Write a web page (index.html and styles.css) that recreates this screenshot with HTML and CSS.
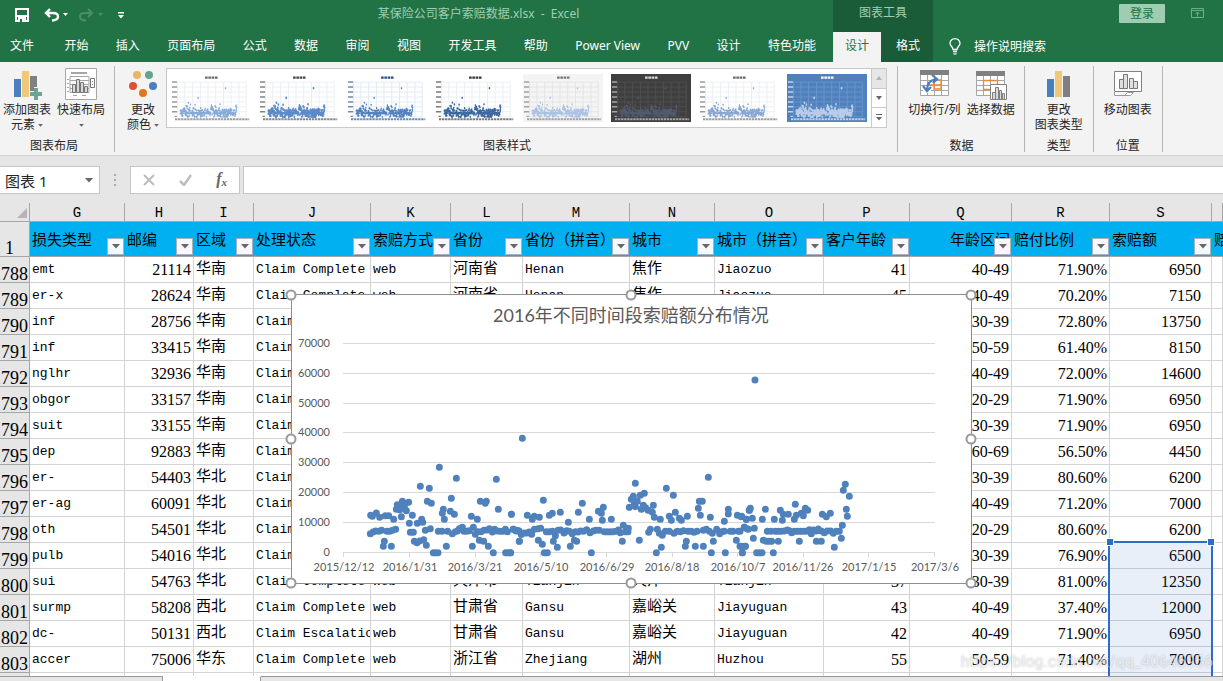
FILE: index.html
```html
<!DOCTYPE html>
<html lang="zh-CN">
<head>
<meta charset="utf-8">
<title>某保险公司客户索赔数据.xlsx - Excel</title>
<link rel="stylesheet" href="styles.css">
</head>
<body>
<svg class="defs" aria-hidden="true">
  <defs>
    <g id="dots" transform="translate(-6 146) scale(.33333)" fill="none" stroke="currentColor" stroke-linecap="round">
      <path d="M463 82h0M514 115h0M406 139h0M433 145h0M499 175h0M634 118h0M256 281h0M264 276h0M272 273h0M282 274h0M290 271h0M306 274h0M314 274h0M323 271h0M332 268h0M376 277h0M385 277h0M421 271h0M436 266h0M460 274h0M471 274h0M488 274h0M502 281h0M511 275h0M517 273h0M523 266h0M532 262h0M537 274h0M545 274h0M553 272h0M565 262h0M571 283h0M578 275h0M588 275h0M597 271h0M606 270h0M613 266h0M622 276h0M629 268h0M637 273h0M645 274h0M653 274h0M661 268h0M667 275h0M685 268h0M693 271h0M701 272h0M709 283h0M257 226h0M262 229h0M274 219h0M284 232h0M301 227h0M311 227h0M326 238h0M349 230h0M334 208h0M337 194h0M344 209h0M352 184h0M355 198h0M361 190h0M359 205h0M371 187h0M364 212h0M382 226h0M373 250h0M397 250h0M410 238h0M413 247h0M427 184h0M439 190h0M472 220h0M475 208h0M478 238h0M496 214h0M508 223h0M559 229h0M577 238h0M586 184h0M601 190h0M604 184h0M640 208h0M679 223h0M295 319h0M298 304h0M319 319h0M388 304h0M396 308h0M404 303h0M416 299h0M424 316h0M484 319h0M562 319h0M583 301h0M596 304h0M610 319h0M445 338h0M452 338h0M459 338h0M625 338h0M662 338h0M669 338h0M677 338h0M703 304h0"/>
      <path transform="translate(675 0)" d="M37 -5h0M735 -180h0M376 130h0M469 145h0M595 112h0M490 166h0M100 181h0M217 190h0M4 223h0M52 226h0M67 238h0M73 229h0M88 232h0M118 226h0M127 220h0M151 217h0M175 247h0M205 217h0M238 238h0M265 214h0M274 220h0M280 202h0M277 241h0M304 238h0M358 202h0M364 178h0M370 169h0M373 187h0M382 184h0M376 200h0M391 166h0M403 160h0M394 208h0M400 196h0M407 203h0M414 211h0M427 217h0M430 196h0M433 232h0M451 238h0M478 229h0M484 241h0M496 217h0M508 235h0M514 241h0M532 229h0M565 205h0M568 184h0M577 184h0M571 226h0M601 232h0M643 244h0M655 208h0M655 222h0M682 226h0M695 229h0M709 238h0M718 211h0M10 268h0M18 273h0M26 273h0M34 283h0M42 279h0M50 279h0M58 276h0M65 283h0M73 268h0M84 266h0M92 265h0M109 275h0M118 275h0M127 274h0M136 287h0M144 271h0M152 270h0M162 279h0M170 272h0M178 274h0M187 281h0M196 275h0M204 276h0M212 273h0M220 274h0M230 269h0M240 278h0M250 273h0M258 271h0M268 271h0M283 275h0M292 275h0M301 275h0M309 275h0M317 274h0M325 270h0M331 278h0M340 256h0M346 275h0M355 265h0M354 275h0M416 277h0M421 268h0M442 268h0M448 280h0M457 286h0M466 274h0M478 274h0M492 280h0M502 274h0M511 275h0M520 272h0M534 274h0M543 274h0M552 277h0M561 274h0M580 271h0M589 268h0M598 274h0M607 280h0M620 268h0M629 281h0M636 275h0M643 274h0M661 274h0M669 274h0M685 274h0M703 262h0M711 266h0M1 338h0M28 304h0M85 301h0M97 313h0M103 338h0M112 338h0M130 304h0M142 322h0M181 319h0M193 301h0M200 304h0M244 338h0M337 304h0M388 301h0M439 338h0M454 322h0M526 319h0M529 304h0M556 319h0M580 319h0M604 338h0M610 304h0M646 338h0M679 301h0M690 319h0M706 319h0M697 338h0"/>
      <path transform="translate(1365 0)" d="M4 230h0M19 238h0M28 211h0M31 205h0M37 235h0M67 238h0M76 208h0M103 238h0M121 211h0M127 241h0M130 223h0M145 223h0M163 238h0M169 226h0M166 193h0M184 220h0M190 227h0M196 205h0M203 211h0M247 223h0M259 230h0M271 220h0M307 256h0M310 151h0M316 133h0M328 169h0M319 208h0M322 229h0M0 274h0M13 262h0M25 268h0M43 265h0M82 274h0M93 274h0M106 274h0M115 274h0M124 274h0M133 273h0M142 270h0M148 272h0M155 278h0M163 274h0M172 274h0M181 274h0M190 274h0M199 274h0M208 269h0M214 281h0M220 270h0M229 273h0M235 267h0M244 273h0M253 278h0M262 273h0M272 273h0M280 280h0M289 274h0M298 274h0M40 295h0M4 319h0M16 319h0M7 338h0M50 338h0M58 338h0M66 338h0M100 338h0M70 301h0M79 304h0M87 304h0M95 304h0M115 304h0M178 304h0M229 304h0M244 304h0M283 322h0M304 295h0"/>
    </g>
    <symbol id="thumb" viewBox="0 0 681 290" preserveAspectRatio="none">
      <g fill="none" stroke="var(--grid)" stroke-width="6">
        <path d="M52 49H644M52 79H644M52 109H644M52 139H644M52 169H644M52 198H644M52 228H644M52 258H644"/>
        <path stroke-width="8" d="M56 49V258M118 49V258M184 49V258M250 49V258M315 49V258M381 49V258M447 49V258M512 49V258M578 49V258M640 49V258"/>
      </g>
      <path stroke="var(--ink)" stroke-width="14" stroke-dasharray="22 6" d="M290 22h106"/>
      <g stroke="var(--ink)" fill="none" stroke-width="9" opacity=".65">
        <path d="M8 49h44M8 79h44M8 109h44M8 139h44M8 169h44M8 198h44M8 228h44M30 256h20"/>
        <path stroke-width="12" stroke-dasharray="20 6" d="M34 274h632"/>
      </g>
      <use href="#dots"/>
    </symbol>
    <symbol id="down" viewBox="0 0 8 5"><path fill="currentColor" d="M0 0h8L4 4.500z"/></symbol>
  </defs>
</svg>

<header class="top">
  <div class="top-main">
    <div class="title-row">
      <div class="quick">
        <button aria-label="保存"><svg width="14" height="14" viewBox="0 0 14 14"><path fill="none" stroke="#fff" stroke-width="2" d="M1 1h12v12H1zM2 8h10"/><path fill="#fff" d="M3 9h8v5H3z"/><path fill="#217346" d="M5 11h2v3H5z"/></svg></button>
        <button class="undo" aria-label="撤销"><svg width="25" height="14" viewBox="0 0 25 14"><path fill="none" stroke="#fff" stroke-width="2.400" d="M6 1L2 5l4 4M2 5h7c3.500 0 5 1.500 5 3.500S12 12.500 8 12.500"/><path fill="#fff" d="M19 5h5l-2.500 3z"/></svg></button>
        <button class="redo" aria-label="恢复"><svg width="25" height="14" viewBox="0 0 25 14"><path fill="none" stroke="#4a8f67" stroke-width="2" d="M9 1l4 4-4 4M13 5H6C2.500 5 1 6.500 1 8.500S3 12.500 7 12.500"/><path fill="#4a8f67" d="M19 5h5l-2.500 3z"/></svg></button>
        <button class="more" aria-label="自定义快速访问工具栏"><svg width="6" height="7" viewBox="0 0 6 7"><path fill="#fff" d="M0 0h6v1.500H0zM0 3h6L3 6.500z"/></svg></button>
      </div>
      <h1 class="title">某保险公司客户索赔数据.xlsx&nbsp; -&nbsp; Excel</h1>
    </div>
    <nav class="tabs">
      <a class="file" href="#">文件</a><a href="#">开始</a><a href="#">插入</a><a href="#">页面布局</a><a href="#">公式</a><a href="#">数据</a><a href="#">审阅</a><a href="#">视图</a><a href="#">开发工具</a><a href="#">帮助</a><a href="#">Power View</a><a href="#">PVV</a><a href="#">设计</a><a href="#">特色功能</a>
    </nav>
  </div>
  <div class="context">
    <div class="context-title">图表工具</div>
    <nav class="tabs"><a class="active" href="#">设计</a><a href="#">格式</a></nav>
  </div>
  <div class="top-end">
    <div class="account">
      <button class="login">登录</button>
      <button aria-label="功能区显示选项"><svg width="13" height="10" viewBox="0 0 13 10"><path fill="none" stroke="#6fae87" d="M.5.5h12v9H.5zM.5 2.500h12M6.500 8.500V4M4.500 6l2-2 2 2"/></svg></button>
    </div>
    <a class="tell" href="#"><svg width="12" height="17" viewBox="0 0 12 17"><path fill="none" stroke="#fff" stroke-width="1.300" d="M4 11.500C4 9 1 8 1 5.300a5 4.600 0 0110 0C11 8 8 9 8 11.500zM4 13.500h4M4.500 15.800h3"/></svg>操作说明搜索</a>
  </div>
</header>

<section class="ribbon">
  <div class="group g-layout">
    <div class="tools">
      <button class="tool"><svg width="32" height="32" viewBox="0 0 32 32"><path fill="#4a7fbb" d="M3 11h7v18H3z"/><path fill="#efc87c" d="M11 3h7v26h-7z"/><path fill="#808080" d="M19 8h7v11h-3v4h-4z"/><path fill="#6da58f" d="M23 20h4v4h4v4h-4v4h-4v-4h-4v-4h4z"/></svg><span>添加图表<br>元素 <svg class="caret" width="5" height="3"><use href="#down"/></svg></span></button>
      <button class="tool"><svg width="32" height="32" viewBox="0 0 32 32"><path fill="#fff" stroke="#a6a6a6" d="M.5.500h31v31H.5z"/><path stroke="#a6a6a6" stroke-width="2" d="M6 5h16"/><path fill="none" stroke="#a6a6a6" d="M5 8.500h19v16H5zM5 12.500h19M5 16.500h19M5 20.500h19M2 11.500h2M2 15.500h2M2 19.500h2M2 23.500h2M8 27.500h4M17 27.500h4"/><path fill="#d9d9d9" stroke="#777" d="M7.500 16.500h3v8h-3zM11.500 11.500h3v13h-3zM15.500 14.500h3v10h-3zM19.500 18.500h3v6h-3z"/><path fill="#fff" stroke="#777" d="M25.500 10.500h4v9h-4zM27 13.500h1M27 16.500h1"/></svg><span>快速布局<br><svg class="caret" width="5" height="3"><use href="#down"/></svg></span></button>
    </div>
    <div class="label">图表布局</div>
  </div>
  <div class="group g-style">
    <div class="tools">
      <button class="tool"><svg width="32" height="32" viewBox="0 0 32 32"><circle cx="10" cy="7" r="4" fill="#eab567"/><circle cx="22" cy="7" r="4" fill="#65a48c"/><circle cx="6" cy="18" r="4" fill="#d85433"/><circle cx="26" cy="18" r="4" fill="#4a7fbb"/><circle cx="16" cy="25" r="4" fill="#e2761d"/></svg><span>更改<br>颜色 <svg class="caret" width="5" height="3"><use href="#down"/></svg></span></button>
      <div class="gallery">
        <div class="thumbs">
          <button class="t1" aria-label="样式 1"><svg><use href="#thumb"/></svg></button>
          <button class="t2" aria-label="样式 2"><svg><use href="#thumb"/></svg></button>
          <button class="t3" aria-label="样式 3"><svg><use href="#thumb"/></svg></button>
          <button class="t4" aria-label="样式 4"><svg><use href="#thumb"/></svg></button>
          <button class="t5" aria-label="样式 5"><svg><use href="#thumb"/></svg></button>
          <button class="t6" aria-label="样式 6"><svg><use href="#thumb"/></svg></button>
          <button class="t7" aria-label="样式 7"><svg><use href="#thumb"/></svg></button>
          <button class="t8" aria-label="样式 8"><svg><use href="#thumb"/></svg></button>
        </div>
        <div class="scroller">
          <button class="off" aria-label="上一行"><svg width="6" height="4" viewBox="0 0 6 4"><path fill="#b5b5b5" d="M0 4h6L3 0z"/></svg></button>
          <button aria-label="下一行"><svg width="6" height="4" viewBox="0 0 6 4"><path fill="#666" d="M0 0h6L3 4z"/></svg></button>
          <button aria-label="其他"><svg width="6" height="7" viewBox="0 0 6 7"><path fill="#666" d="M0 0h6v1H0zM0 3h6L3 6.500z"/></svg></button>
        </div>
      </div>
    </div>
    <div class="label">图表样式</div>
  </div>
  <div class="group g-data">
    <div class="tools">
      <button class="tool"><svg width="32" height="32" viewBox="0 0 32 32"><path fill="#fff" stroke="#a6a6a6" d="M2.500 3.500h28v24h-28zM2.500 12.500h28M2.500 17.500h28M2.500 22.500h28M9.500 6v21M16.500 6v21M23.500 6v21"/><path fill="#808080" d="M2 2h29v5H2z"/><path fill="none" stroke="#ed8733" stroke-width="1.300" d="M16 12h7v9h-7zM9 17h14"/><path fill="#fff" d="M5 18h8v7H5z"/><path fill="none" stroke="#4a7fbb" stroke-width="2.200" d="M9 22c0-7 3-10 9-11M14 7l5 4-4 4M5 18l4 5 4-4"/></svg><span>切换行/列</span></button>
      <button class="tool"><svg width="32" height="32" viewBox="0 0 32 32"><path fill="#fff" stroke="#a6a6a6" d="M1.500 3.500h28v24h-28zM1.500 12.500h28M1.500 17.500h28M1.500 22.500h28M8.500 7v20M15.500 7v20M22.500 7v20"/><path fill="#808080" d="M1 3h29v5H1z"/><path fill="none" stroke="#ed8733" stroke-width="1.300" d="M8.500 22v-9.500h14V16M8.500 21.500H15"/><path fill="#fff" stroke="#808080" d="M15.500 16.500h16v15h-16z"/><path fill="#d9d9d9" stroke="#808080" d="M17.500 24.500h3v7h-3zM20.500 19.500h3v12h-3zM24.500 22.500h2v9h-2zM27.500 25.500h2v6h-2z"/></svg><span>选择数据</span></button>
    </div>
    <div class="label">数据</div>
  </div>
  <div class="group g-type">
    <div class="tools">
      <button class="tool"><svg width="32" height="32" viewBox="0 0 32 32"><path fill="#4a7fbb" d="M4 11h7v18H4z"/><path fill="#efc87c" d="M12 3h7v26h-7z"/><path fill="#808080" d="M20 8h7v21h-7z"/></svg><span>更改<br>图表类型</span></button>
    </div>
    <div class="label">类型</div>
  </div>
  <div class="group g-place">
    <div class="tools">
      <button class="tool"><svg width="32" height="32" viewBox="0 0 32 32"><path fill="#fff" stroke="#808080" d="M2.500 3.500h27v20h-27z"/><path fill="#e0e0e0" stroke="#777" d="M7.500 11.500h4v9h-4zM11.500 6.500h4v14h-4zM17.500 10.500h4v10h-4zM21.500 13.500h4v7h-4z"/><path fill="#fff" stroke="#999" d="M2.500 23.500v4h10l3-3h6l-3 3h-9"/></svg><span>移动图表</span></button>
    </div>
    <div class="label">位置</div>
  </div>
</section>

<section class="formula-bar">
  <div class="name-box">
    <input aria-label="名称框" value="图表 1">
    <button aria-label="名称列表"><svg width="8" height="5"><use href="#down"/></svg></button>
  </div>
  <svg class="grip" width="2" height="12" viewBox="0 0 2 12"><path fill="#aaa" d="M0 0h2v2H0zM0 5h2v2H0zM0 10h2v2H0z"/></svg>
  <div class="fx-box">
    <button aria-label="取消"><svg width="12" height="12" viewBox="0 0 12 12"><path stroke="#bdbdbd" stroke-width="2" d="M1 1l10 10M11 1L1 11"/></svg></button>
    <button aria-label="输入"><svg width="13" height="12" viewBox="0 0 13 12"><path fill="none" stroke="#bdbdbd" stroke-width="2.500" d="M1 7l4 4 7-10"/></svg></button>
    <button class="fx" aria-label="插入函数">f<sub>x</sub></button>
  </div>
  <input class="formula" aria-label="编辑栏">
</section>

<main class="sheet">
  <table>
    <colgroup><col class="w30"><col class="w95"><col class="w69"><col class="w60"><col class="w117"><col class="w80"><col class="w72"><col class="w107"><col class="w85"><col class="w109"><col class="w86"><col class="w102"><col class="w98"><col class="w102"><col></colgroup>
    <thead>
      <tr class="letters"><th class="corner"><svg width="10" height="10" viewBox="0 0 10 10"><path fill="#b4b4b4" d="M10 0v10H0z"/></svg></th><th>G</th><th>H</th><th>I</th><th>J</th><th>K</th><th>L</th><th>M</th><th>N</th><th>O</th><th>P</th><th>Q</th><th>R</th><th>S</th><th></th></tr>
      <tr class="fields"><th class="rownum">1</th>
        <th>损失类型<button aria-label="筛选损失类型"><svg width="8" height="5"><use href="#down"/></svg></button></th>
        <th>邮编<button aria-label="筛选邮编"><svg width="8" height="5"><use href="#down"/></svg></button></th>
        <th>区域<button aria-label="筛选区域"><svg width="8" height="5"><use href="#down"/></svg></button></th>
        <th>处理状态<button aria-label="筛选处理状态"><svg width="8" height="5"><use href="#down"/></svg></button></th>
        <th>索赔方式<button aria-label="筛选索赔方式"><svg width="8" height="5"><use href="#down"/></svg></button></th>
        <th>省份<button aria-label="筛选省份"><svg width="8" height="5"><use href="#down"/></svg></button></th>
        <th>省份（拼音）<button aria-label="筛选省份拼音"><svg width="8" height="5"><use href="#down"/></svg></button></th>
        <th>城市<button aria-label="筛选城市"><svg width="8" height="5"><use href="#down"/></svg></button></th>
        <th>城市（拼音）<button aria-label="筛选城市拼音"><svg width="8" height="5"><use href="#down"/></svg></button></th>
        <th>客户年龄<button aria-label="筛选客户年龄"><svg width="8" height="5"><use href="#down"/></svg></button></th>
        <th class="right">年龄区间<button aria-label="筛选年龄区间"><svg width="8" height="5"><use href="#down"/></svg></button></th>
        <th>赔付比例<button aria-label="筛选赔付比例"><svg width="8" height="5"><use href="#down"/></svg></button></th>
        <th>索赔额<button aria-label="筛选索赔额"><svg width="8" height="5"><use href="#down"/></svg></button></th>
        <th>赔</th></tr>
    </thead>
    <tbody>
      <tr><th>1788</th><td>emt</td><td>21114</td><td>华南</td><td>Claim Complete</td><td>web</td><td>河南省</td><td>Henan</td><td>焦作</td><td>Jiaozuo</td><td>41</td><td>40-49</td><td>71.90%</td><td>6950</td><td></td></tr>
      <tr><th>1789</th><td>er-x</td><td>28624</td><td>华南</td><td>Claim Complete</td><td>web</td><td>河南省</td><td>Henan</td><td>焦作</td><td>Jiaozuo</td><td>45</td><td>40-49</td><td>70.20%</td><td>7150</td><td></td></tr>
      <tr><th>1790</th><td>inf</td><td>28756</td><td>华南</td><td>Claim</td><td></td><td></td><td></td><td></td><td></td><td></td><td>30-39</td><td>72.80%</td><td>13750</td><td></td></tr>
      <tr><th>1791</th><td>inf</td><td>33415</td><td>华南</td><td>Claim</td><td></td><td></td><td></td><td></td><td></td><td></td><td>50-59</td><td>61.40%</td><td>8150</td><td></td></tr>
      <tr><th>1792</th><td>nglhr</td><td>32936</td><td>华南</td><td>Claim</td><td></td><td></td><td></td><td></td><td></td><td></td><td>40-49</td><td>72.00%</td><td>14600</td><td></td></tr>
      <tr><th>1793</th><td>obgor</td><td>33157</td><td>华南</td><td>Claim</td><td></td><td></td><td></td><td></td><td></td><td></td><td>20-29</td><td>71.90%</td><td>6950</td><td></td></tr>
      <tr><th>1794</th><td>suit</td><td>33155</td><td>华南</td><td>Claim</td><td></td><td></td><td></td><td></td><td></td><td></td><td>30-39</td><td>71.90%</td><td>6950</td><td></td></tr>
      <tr><th>1795</th><td>dep</td><td>92883</td><td>华南</td><td>Claim</td><td></td><td></td><td></td><td></td><td></td><td></td><td>60-69</td><td>56.50%</td><td>4450</td><td></td></tr>
      <tr><th>1796</th><td>er-</td><td>54403</td><td>华北</td><td>Claim</td><td></td><td></td><td></td><td></td><td></td><td></td><td>30-39</td><td>80.60%</td><td>6200</td><td></td></tr>
      <tr><th>1797</th><td>er-ag</td><td>60091</td><td>华北</td><td>Claim</td><td></td><td></td><td></td><td></td><td></td><td></td><td>40-49</td><td>71.20%</td><td>7000</td><td></td></tr>
      <tr><th>1798</th><td>oth</td><td>54501</td><td>华北</td><td>Claim</td><td></td><td></td><td></td><td></td><td></td><td></td><td>20-29</td><td>80.60%</td><td>6200</td><td></td></tr>
      <tr><th>1799</th><td>pulb</td><td>54016</td><td>华北</td><td>Claim</td><td></td><td></td><td></td><td></td><td></td><td></td><td>30-39</td><td>76.90%</td><td>6500</td><td></td></tr>
      <tr><th>1800</th><td>sui</td><td>54763</td><td>华北</td><td>Claim Complete</td><td>web</td><td>天津市</td><td>Tianjin</td><td>天津</td><td>Tianjin</td><td>37</td><td>30-39</td><td>81.00%</td><td>12350</td><td></td></tr>
      <tr><th>1801</th><td>surmp</td><td>58208</td><td>西北</td><td>Claim Complete</td><td>web</td><td>甘肃省</td><td>Gansu</td><td>嘉峪关</td><td>Jiayuguan</td><td>43</td><td>40-49</td><td>37.40%</td><td>12000</td><td></td></tr>
      <tr><th>1802</th><td>dc-</td><td>50131</td><td>西北</td><td>Claim Escalation</td><td>web</td><td>甘肃省</td><td>Gansu</td><td>嘉峪关</td><td>Jiayuguan</td><td>42</td><td>40-49</td><td>71.90%</td><td>6950</td><td></td></tr>
      <tr><th>1803</th><td>accer</td><td>75006</td><td>华东</td><td>Claim Complete</td><td>web</td><td>浙江省</td><td>Zhejiang</td><td>湖州</td><td>Huzhou</td><td>55</td><td>50-59</td><td>71.40%</td><td>7000</td><td></td></tr>
      <tr><th></th><td></td><td></td><td></td><td></td><td></td><td></td><td></td><td></td><td></td><td></td><td></td><td></td><td></td><td></td></tr>
    </tbody>
  </table>

  <div class="selection"></div>

  <svg class="chart" width="681" height="290" viewBox="0 0 681 290">
    <path fill="#fff" stroke="#8e8e8e" d="M.5.500h680v289H.5z"/>
    <path fill="none" stroke="#d9d9d9" d="M52 49.500H644M52 79.500H644M52 109.500H644M52 138.500H644M52 168.500H644M52 198.500H644M52 228.500H644M52 258.500H644M52.500 258v5M118.500 258v5M184.500 258v5M249.500 258v5M315.500 258v5M381.500 258v5M446.500 258v5M512.500 258v5M577.500 258v5M643.500 258v5"/>
    <text class="chart-title" x="340" y="28">2016年不同时间段索赔额分布情况</text>
    <g class="axis y">
      <text x="39" y="53">70000</text><text x="39" y="83">60000</text><text x="39" y="113">50000</text><text x="39" y="142">40000</text><text x="39" y="172">30000</text><text x="39" y="202">20000</text><text x="39" y="232">10000</text><text x="39" y="262">0</text>
    </g>
    <g class="axis x">
      <text x="53" y="277">2015/12/12</text><text x="119" y="277">2016/1/31</text><text x="184" y="277">2016/3/21</text><text x="250" y="277">2016/5/10</text><text x="316" y="277">2016/6/29</text><text x="381" y="277">2016/8/18</text><text x="447" y="277">2016/10/7</text><text x="512" y="277">2016/11/26</text><text x="578" y="277">2017/1/15</text><text x="644" y="277">2017/3/6</text>
    </g>
    <use class="points" href="#dots"/>
    <g fill="#fff" stroke="#999" stroke-width="2">
      <circle cx="0" cy="1" r="4.500"/><circle cx="340" cy="1" r="4.500"/><circle cx="680" cy="1" r="4.500"/><circle cx="0" cy="145" r="4.500"/><circle cx="680" cy="145" r="4.500"/><circle cx="0" cy="289" r="4.500"/><circle cx="340" cy="289" r="4.500"/><circle cx="680" cy="289" r="4.500"/>
    </g>
  </svg>
</main>
<footer class="sheet-tabs"><span class="tab-a"></span><span class="tab-on"></span><span class="tab-b"></span></footer>
<div class="watermark">https://blog.csdn.net/qq_40646956</div>
</body>
</html>
```

FILE: styles.css
```css
* { box-sizing: border-box; }
html, body { height: 100%; }
body {
  margin: 0;
  display: flex;
  flex-direction: column;
  overflow: hidden;
  position: relative;
  background: #e6e6e6;
  color: #262626;
  font: 12px/15px "Noto Sans", "Noto Sans CJK SC", sans-serif;
}
button, input { font: inherit; color: inherit; border: 0; padding: 0; background: none; margin: 0; }
button svg { display: block; }
a { color: inherit; text-decoration: none; }
.defs { position: absolute; width: 0; height: 0; }

/* title bar and tabs */
.top { display: flex; flex: none; background: #217346; color: #fff; }
.top-main { flex: none; width: 833px; }
.title-row { display: flex; align-items: center; height: 32px; }
.quick { display: flex; align-items: center; padding: 0 0 2px 15px; }
.quick .undo { margin-left: 15px; }
.quick .redo { margin-left: 10px; }
.quick .more { margin-left: 14px; }
.title { flex: 1; margin: 0; padding-bottom: 6px; font: inherit; text-align: center; color: #a0cfb2; }
.tabs { display: flex; gap: 3px; }
.tabs a { padding: 6px 12px 9px; white-space: nowrap; }
.top-main .tabs { justify-content: space-between; gap: 0; padding-right: 5px; }
.top-main .tabs .file { padding: 6px 15px 9px 10px; }
.context { flex: none; width: 100px; background: #1a5c38; }
.context-title { height: 32px; padding-top: 5px; text-align: center; color: #a0cfb2; }
.tabs .active { background: #f3f3f3; color: #217346; }
.top-end { flex: 1; display: flex; flex-direction: column; }
.account { display: flex; justify-content: flex-end; align-items: center; gap: 26px; height: 32px; padding: 0 19px 6px 0; }
.login { padding: 2px 11px; border-radius: 1px; background: #9fcdb1; color: #217346; }
.tell { display: flex; align-items: center; gap: 13px; padding: 6px 16px; }

/* ribbon */
.ribbon { display: flex; flex: none; height: 94px; padding: 4px 0 3px; background: #f3f3f3; border-bottom: 1px solid #d0d0d0; }
.group { display: flex; flex-direction: column; justify-content: space-between; border-right: 1px solid #b4b4b4; flex: none; }
.tools { display: flex; align-items: flex-start; gap: 6px; }
.tool { display: flex; flex-direction: column; align-items: center; gap: 2px; padding-top: 2px; white-space: nowrap; }
.label { text-align: center; margin-bottom: -1px; }
.tool .caret { display: inline-block; vertical-align: middle; color: #666; }
.g-layout { padding: 0 9px 0 3px; }
.g-style { padding: 0 10px 0 12px; }
.g-style .tools { gap: 7px; }
.g-data { padding: 0 9px 0 10px; }
.g-type, .g-place { padding: 0 10px; }
.gallery { display: flex; height: 60px; margin-top: 2px; border: 1px solid #c8c8c8; background: #fff; }
.thumbs { display: flex; gap: 8px; padding: 5px 4px; }
.thumbs button { width: 80px; height: 48px; --grid: #eceef1; --ink: #666; color: #84a8d8; stroke-width: 38px; }
.thumbs svg { width: 80px; height: 48px; }
.thumbs .t2 { --ink: #444; color: #5c8ac8; stroke-width: 46px; }
.thumbs .t3 { --grid: #dfeaf5; --ink: #1f4e85; color: #4f7fbd; }
.thumbs .t4 { --ink: #333; color: #3d689f; stroke-width: 42px; }
.thumbs .t5 { background: #f4f4f4; --grid: #e4e4e4; --ink: #777; color: #a9c2e4; }
.thumbs .t6 { background: #3f3f3f; --grid: #505050; --ink: #ddd; color: #505c70; }
.thumbs .t7 { color: #86a5d0; }
.thumbs .t8 { background: #4f81bd; --grid: #6995cb; --ink: #fff; color: #b9cdea; stroke-width: 46px; }
.scroller { display: flex; flex-direction: column; width: 15px; border-left: 1px solid #c8c8c8; }
.scroller button { flex: 1; display: flex; align-items: center; justify-content: center; }
.scroller button + button { border-top: 1px solid #c8c8c8; }
.scroller .off { background: #e6e6e6; }

/* formula bar */
.formula-bar { display: flex; flex: none; align-items: center; height: 47px; padding: 10px 0 9px; }
.name-box { display: flex; align-items: center; width: 100px; height: 28px; background: #fff; border: 1px solid #c6c6c6; border-left: 0; }
.name-box input { flex: 1; min-width: 0; padding-left: 5px; font-size: 15px; }
.name-box button { padding: 0 6px; color: #666; }
.grip { margin: 0 14px; }
.fx-box { display: flex; align-items: center; justify-content: space-between; width: 110px; height: 28px; padding: 0 12px; background: #fff; border: 1px solid #c6c6c6; }
.fx { font: italic bold 16px/20px "Liberation Serif", serif; color: #666; }
.fx sub { font-size: 11px; vertical-align: -2px; }
.formula { flex: 1; height: 28px; margin-left: 3px; background: #fff; border: 1px solid #c6c6c6; border-right: 0; }

/* worksheet */
.sheet { position: relative; flex: 1; min-height: 0; overflow: hidden; background: #fff; color: #000; }
.sheet table { width: 100%; table-layout: fixed; border-collapse: separate; border-spacing: 0; }
.w30 { width: 30px; } .w95 { width: 95px; } .w69 { width: 69px; } .w60 { width: 60px; } .w117 { width: 117px; }
.w80 { width: 80px; } .w72 { width: 72px; } .w107 { width: 107px; } .w85 { width: 85px; } .w109 { width: 109px; }
.w86 { width: 86px; } .w102 { width: 102px; } .w98 { width: 98px; }
.sheet th, .sheet td { padding: 0 2px; border-right: 1px solid #d4d4d4; border-bottom: 1px solid #d4d4d4; font-weight: normal; overflow: hidden; white-space: nowrap; }
.letters th { height: 19px; background: #e6e6e6; border-color: #a6a6a6; font: 14px/16px "Liberation Mono", monospace; padding-top: 2px; }
.corner svg { display: block; margin-left: auto; }
.fields th { position: relative; height: 35px; vertical-align: top; padding-top: 7px; background: #00b0f0; border-right: 0; border-bottom-color: #a6a6a6; text-align: left; font: 15px/20px "Noto Sans CJK SC", sans-serif; }
.fields .right { text-align: right; }
.fields button { position: absolute; right: 1px; bottom: 1px; width: 17px; height: 17px; display: flex; align-items: center; justify-content: center; background: #f7f8fb; border: 1px solid #a9b1bd; color: #666; }
.sheet tbody th, .sheet .rownum { background: #e6e6e6; border-right: 1px solid #a6a6a6; border-bottom-color: #a6a6a6; vertical-align: bottom; font: 18px/15px "Liberation Serif", serif; }
.sheet tbody th { direction: rtl; text-align: right; padding: 0 2px 0 0; }
.sheet .rownum { text-align: center; padding-right: 12px; }
.sheet td { height: 26px; line-height: 25px; font-family: "Liberation Mono", "Noto Sans CJK SC", monospace; font-size: 13px; }
.sheet td:nth-child(4), .sheet td:nth-child(7), .sheet td:nth-child(9) { font-size: 15px; padding-top: 1px; line-height: 24px; }
.sheet td:nth-child(3), .sheet td:nth-child(n+11) { text-align: right; font-family: "Liberation Serif", serif; font-size: 16px; padding-top: 1px; line-height: 24px; }
.sheet td:nth-child(14) { padding-right: 10px; }

.selection { position: absolute; left: 1108px; top: 338px; bottom: -3px; width: 105px; border: 2px solid #2f6bc9; background: rgba(47, 107, 201, .11); }
.selection::before, .selection::after { content: ""; position: absolute; top: -4px; width: 6px; height: 6px; background: #2f6bc9; outline: 1px solid #fff; }
.selection::before { left: -3px; }
.selection::after { right: -3px; }

.chart { position: absolute; left: 291px; top: 91px; overflow: visible; }
.chart-title { font: 18px Lato, "Noto Sans CJK SC", sans-serif; fill: #595959; text-anchor: middle; }
.axis { font: 11px Lato, sans-serif; fill: #595959; }
.axis.y { text-anchor: end; }
.axis.x { text-anchor: middle; }
.points { color: #4f81bd; stroke-width: 21px; }

.sheet-tabs { display: flex; flex: none; height: 5px; }
.sheet-tabs span { border-top: 1px solid #999; }
.tab-a { width: 163px; border-right: 1px solid #999; }
.sheet-tabs .tab-on { width: 98px; background: #fff; border-top-color: #fff; border-right: 1px solid #999; }
.tab-b { flex: 1; }
.watermark { position: absolute; right: 10px; bottom: 9px; font: 16px/20px Roboto, sans-serif; color: rgba(255, 255, 255, .6); text-shadow: 0 0 2px rgba(0, 0, 0, .25); pointer-events: none; }
```
